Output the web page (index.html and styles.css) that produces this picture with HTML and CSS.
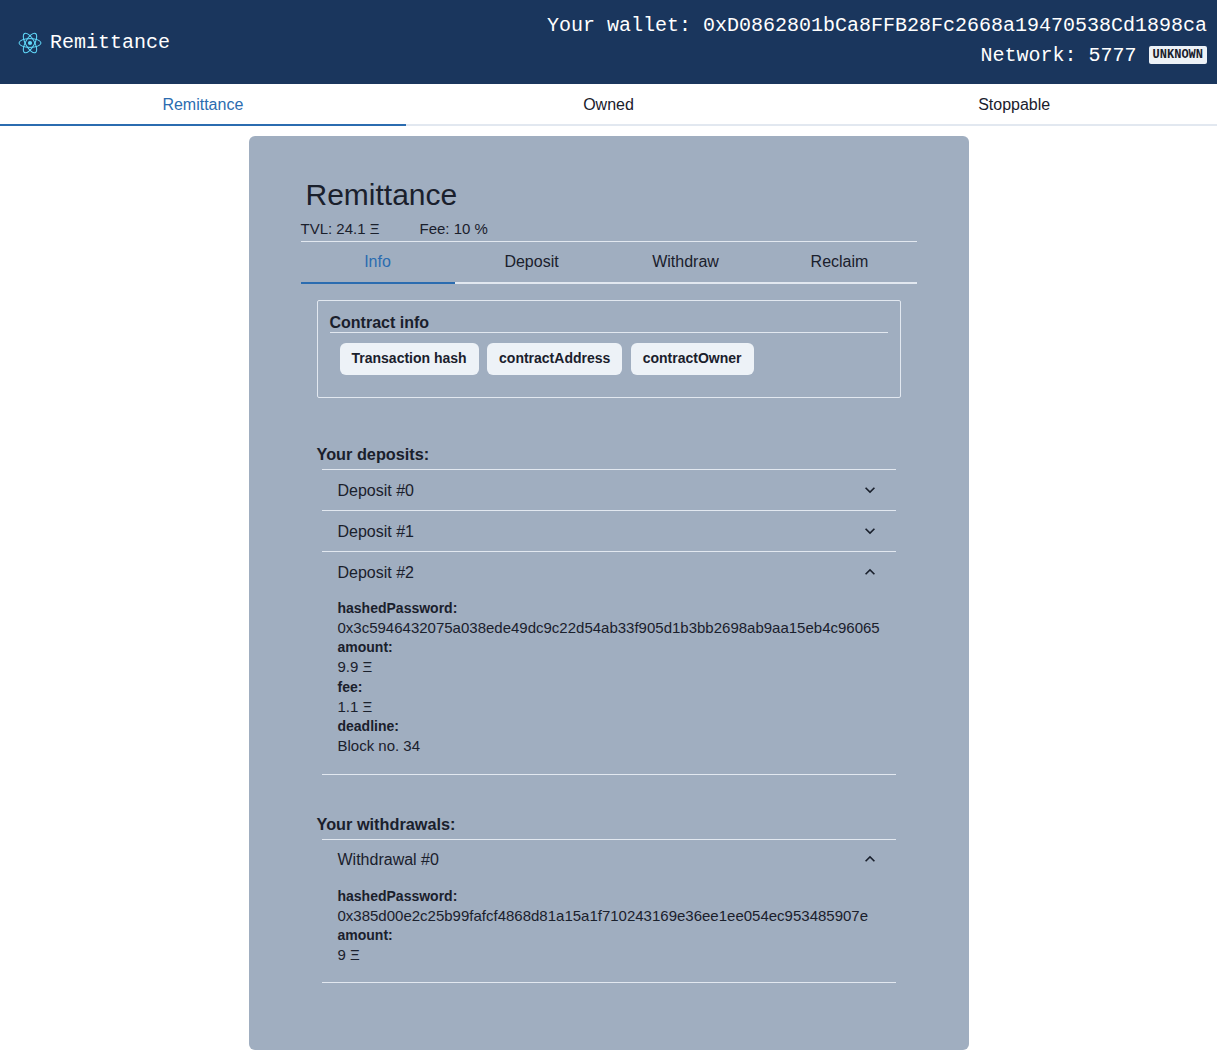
FILE: index.html
```html
<!DOCTYPE html>
<html lang="en">
<head>
  <meta charset="UTF-8" />
  <title>Remittance</title>
  <link rel="stylesheet" href="styles.css">
</head>
<body>

  <header class="topbar">
    <div class="brand">
      <svg class="brand-logo" viewBox="0 0 24 24" fill="none" stroke="#61dafb" stroke-width="1">
        <circle cx="12" cy="12" r="2.1" fill="#61dafb" stroke="none" />
        <ellipse cx="12" cy="12" rx="11" ry="4.4" />
        <ellipse cx="12" cy="12" rx="11" ry="4.4" transform="rotate(60 12 12)" />
        <ellipse cx="12" cy="12" rx="11" ry="4.4" transform="rotate(120 12 12)" />
      </svg>
      <span>Remittance</span>
    </div>
    <div class="wallet">
      <div class="wallet-line">Your wallet: 0xD0862801bCa8FFB28Fc2668a19470538Cd1898ca</div>
      <div class="wallet-line">Network: 5777 <span class="badge">Unknown</span></div>
    </div>
  </header>

  <nav class="tabs">
    <a class="tab active">Remittance</a>
    <a class="tab">Owned</a>
    <a class="tab">Stoppable</a>
  </nav>

  <main class="card">
    <h2 class="card-title">Remittance</h2>
    <div class="stats">
      <span>TVL: 24.1 Ξ</span>
      <span>Fee: 10 %</span>
    </div>
    <hr class="rule">

    <nav class="tabs inner-tabs">
      <a class="tab active">Info</a>
      <a class="tab">Deposit</a>
      <a class="tab">Withdraw</a>
      <a class="tab">Reclaim</a>
    </nav>

    <section class="panel">
      <div class="info-box">
        <h3 class="info-title">Contract info</h3>
        <hr class="rule">
        <div class="info-buttons">
          <button class="btn">Transaction hash</button>
          <button class="btn">contractAddress</button>
          <button class="btn">contractOwner</button>
        </div>
      </div>

      <h3 class="list-title deposits-title">Your deposits:</h3>
      <div class="accordion">
        <div class="acc-item">
          <div class="acc-head">
            <span>Deposit #0</span>
            <svg class="chevron" viewBox="0 0 24 24"><path d="M16.59 8.59L12 13.17 7.41 8.59 6 10l6 6 6-6z" /></svg>
          </div>
        </div>
        <div class="acc-item">
          <div class="acc-head">
            <span>Deposit #1</span>
            <svg class="chevron" viewBox="0 0 24 24"><path d="M16.59 8.59L12 13.17 7.41 8.59 6 10l6 6 6-6z" /></svg>
          </div>
        </div>
        <div class="acc-item">
          <div class="acc-head">
            <span>Deposit #2</span>
            <svg class="chevron up" viewBox="0 0 24 24"><path d="M16.59 8.59L12 13.17 7.41 8.59 6 10l6 6 6-6z" /></svg>
          </div>
          <div class="acc-body">
            <div class="field-name">hashedPassword:</div>
            <div class="field-value">0x3c5946432075a038ede49dc9c22d54ab33f905d1b3bb2698ab9aa15eb4c96065</div>
            <div class="field-name">amount:</div>
            <div class="field-value">9.9 Ξ</div>
            <div class="field-name">fee:</div>
            <div class="field-value">1.1 Ξ</div>
            <div class="field-name">deadline:</div>
            <div class="field-value">Block no. 34</div>
          </div>
        </div>
      </div>

      <h3 class="list-title withdrawals-title">Your withdrawals:</h3>
      <div class="accordion">
        <div class="acc-item">
          <div class="acc-head">
            <span>Withdrawal #0</span>
            <svg class="chevron up" viewBox="0 0 24 24"><path d="M16.59 8.59L12 13.17 7.41 8.59 6 10l6 6 6-6z" /></svg>
          </div>
          <div class="acc-body">
            <div class="field-name">hashedPassword:</div>
            <div class="field-value">0x385d00e2c25b99fafcf4868d81a15a1f710243169e36ee1ee054ec953485907e</div>
            <div class="field-name">amount:</div>
            <div class="field-value">9 Ξ</div>
          </div>
        </div>
      </div>
    </section>
  </main>

</body>
</html>
```

FILE: styles.css
```css
* {
  box-sizing: border-box;
}
body {
  margin: 0;
  font-family: "Liberation Sans", Arial, sans-serif;
  font-size: 16px;
  line-height: 24px;
  color: #1a202c;
  background: white;
  text-rendering: optimizeLegibility;
  -webkit-font-smoothing: antialiased;
}
h2, h3 {
  margin: 0;
}
.rule {
  margin: 0;
  border: 0;
  border-top: 1px solid #e2e8f0;
}

/* top bar */
.topbar {
  height: 84px;
  padding: 10px 10px 12px 18px;
  display: flex;
  justify-content: space-between;
  align-items: center;
  background: #1a365d;
  color: white;
  font-family: "Liberation Mono", monospace;
  font-size: 20px;
}
.brand {
  display: flex;
  align-items: center;
  gap: 8px;
  margin-top: 4px;
}
.brand-logo {
  width: 24px;
  height: 24px;
}
.wallet {
  text-align: right;
}
.wallet-line {
  line-height: 30px;
}
.badge {
  display: inline-block;
  padding: 0 4px;
  border-radius: 2px;
  background: #edf2f7;
  color: #1a202c;
  font-size: 12px;
  font-weight: bold;
  line-height: 18px;
  text-transform: uppercase;
  vertical-align: 3px;
}

/* tabs */
.tabs {
  display: flex;
  border-bottom: 2px solid #e2e8f0;
}
.tab {
  flex: 1;
  margin-bottom: -2px;
  padding: 9px 16px 7px;
  border-bottom: 2px solid transparent;
  text-align: center;
}
.tab.active {
  color: #2b6cb0;
  border-bottom-color: #2b6cb0;
}
.inner-tabs .tab {
  padding: 8px 16px;
}

/* card */
.card {
  width: 720px;
  height: 914px;
  margin: 10px auto 0;
  padding: 41px 52px 0;
  border-radius: 6px;
  background: #a0aec0;
}
.card-title {
  margin-left: 5px;
  font-size: 30px;
  font-weight: normal;
  line-height: 36px;
}
.stats {
  display: flex;
  gap: 40px;
  margin-top: 6px;
  font-size: 15px;
  line-height: 20px;
}
.stats + .rule {
  margin-top: 2px;
}

.panel {
  padding: 16px;
}
.info-box {
  height: 98px;
  padding: 12px;
  border: 1px solid #e2e8f0;
  border-radius: 2px;
}
.info-title {
  font-size: 16px;
  line-height: 19px;
}
.info-buttons {
  display: flex;
  gap: 8.4px;
  margin: 10px 0 0 10px;
}
.btn {
  height: 32px;
  padding: 0 12px 2px;
  border: 0;
  border-radius: 6px;
  background: #edf2f7;
  color: #1a202c;
  font-family: inherit;
  font-size: 14px;
  font-weight: bold;
  text-rendering: inherit;
}

.list-title {
  font-size: 16.3px;
  line-height: 20px;
}
.deposits-title {
  margin-top: 46px;
}
.withdrawals-title {
  margin-top: 39px;
}

/* accordion */
.accordion {
  margin: 5px 5px 0;
  border-bottom: 1px solid #e2e8f0;
}
.acc-item {
  border-top: 1px solid #e2e8f0;
}
.acc-head {
  height: 40px;
  padding: 9px 16px 7px;
  display: flex;
  justify-content: space-between;
  align-items: center;
}
.withdrawals-title + .accordion .acc-head {
  padding: 8px 16px;
}
.chevron {
  width: 20px;
  height: 20px;
  fill: #1a202c;
  margin-top: -2px;
}
.chevron.up {
  transform: rotate(180deg);
}
.acc-body {
  padding: 6px 16px 18px;
}
.field-name {
  font-size: 14px;
  font-weight: bold;
  line-height: 20px;
}
.field-value {
  font-size: 15px;
  line-height: 19.4px;
}
```
